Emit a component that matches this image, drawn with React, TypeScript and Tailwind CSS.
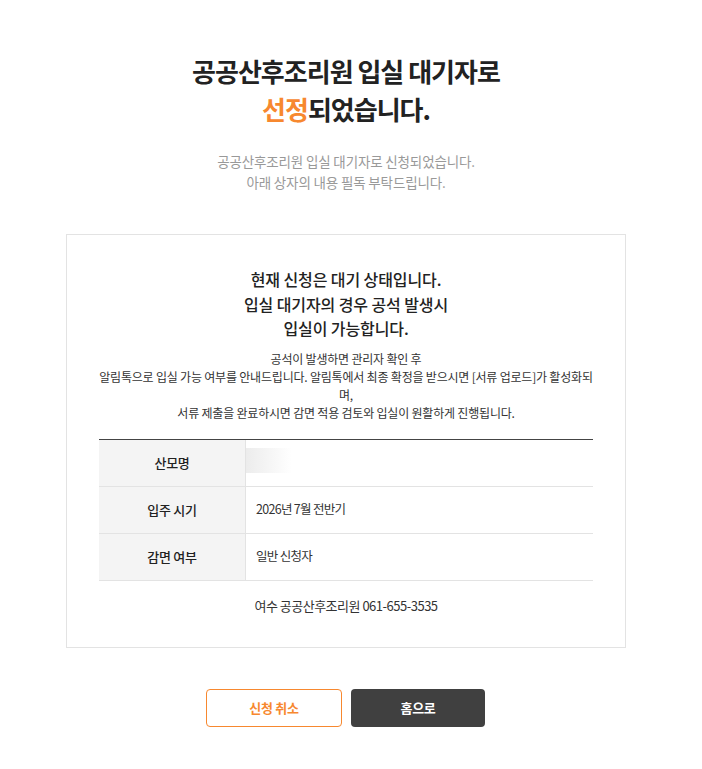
const font = { fontFamily: '"Noto Sans CJK KR", "Noto Sans", sans-serif' };

const rows = [
  { label: '산모명', value: null },
  { label: '입주 시기', value: '2026년 7월 전반기' },
  { label: '감면 여부', value: '일반 신청자' },
];

export default function App() {
  return (
    <div className="min-h-screen bg-white" style={font}>
      <div className="w-[692px] flex flex-col items-center pt-[52px] pb-[40px]">
        <h1 className="text-center text-[26px] leading-[38px] font-bold tracking-[-1px] text-[#222]">
          공공산후조리원 입실 대기자로
          <br />
          <span className="text-[#f7882f]">선정</span>되었습니다.
        </h1>

        <p className="mt-[23px] text-center text-[13.5px] leading-[21px] tracking-[-0.15px] text-[#999]">
          공공산후조리원 입실 대기자로 신청되었습니다.
          <br />
          아래 상자의 내용 필독 부탁드립니다.
        </p>

        <div className="mt-[41px] w-[560px] border border-[#e3e3e3] px-[32px] pt-[32px] pb-[31px]">
          <h2 className="text-center text-[16px] leading-[24.5px] font-medium tracking-[-0.1px] text-[#222]">
            현재 신청은 대기 상태입니다.
            <br />
            입실 대기자의 경우 공석 발생시
            <br />
            입실이 가능합니다.
          </h2>

          <div className="mt-[9px] text-center text-[12px] leading-[18px] tracking-[-0.2px] text-[#333]">
            <p className="whitespace-nowrap">공석이 발생하면 관리자 확인 후</p>
            <p className="whitespace-nowrap">
              알림톡으로 입실 가능 여부를 안내드립니다. 알림톡에서 최종 확정을 받으시면 [서류 업로드]가 활성화되
            </p>
            <p className="whitespace-nowrap">며,</p>
            <p className="whitespace-nowrap">서류 제출을 완료하시면 감면 적용 검토와 입실이 원활하게 진행됩니다.</p>
          </div>

          <div className="mt-[17px] border-t border-[#444]">
            {rows.map((row) => (
              <div key={row.label} className="flex h-[47px] border-b border-[#e3e3e3]">
                <div className="w-[147px] shrink-0 bg-[#f4f4f4] border-r border-[#e3e3e3] flex items-center justify-center text-[13px] font-medium tracking-[-0.3px] text-[#222]">
                  {row.label}
                </div>
                <div className="flex-1 flex items-center">
                  {row.value ? (
                    <span className="pl-[10px] text-[12.5px] tracking-[-0.7px] text-[#333]">{row.value}</span>
                  ) : (
                    <div className="self-start mt-[8px] w-[46px] h-[25px] bg-gradient-to-r from-[#ececec] to-white" />
                  )}
                </div>
              </div>
            ))}
          </div>

          <p className="mt-[15px] text-center text-[13px] leading-[20px] tracking-[-0.5px] text-[#333]">
            여수 공공산후조리원 061-655-3535
          </p>
        </div>

        <div className="mt-[41px] flex gap-[9px] pr-[1px]">
          <button className="w-[136px] h-[38px] rounded-[4px] border border-[#f7882f] bg-white text-[13px] font-bold tracking-[-0.3px] text-[#f7882f]">
            신청 취소
          </button>
          <button className="w-[134px] h-[38px] rounded-[4px] bg-[#404040] text-[13px] font-bold tracking-[-0.3px] text-white">
            홈으로
          </button>
        </div>
      </div>
    </div>
  );
}
